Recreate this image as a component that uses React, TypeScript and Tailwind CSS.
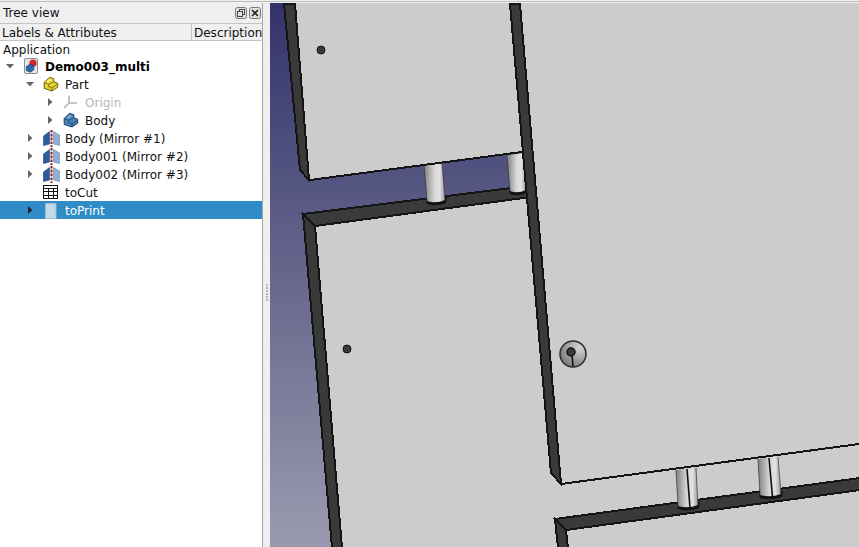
import type { ReactNode } from 'react';

function Arrow({ dir, fill = '#666' }: { dir?: 'down' | 'right'; fill?: string }) {
  if (!dir) return <span className="w-5 shrink-0" />;
  return (
    <span className="flex w-5 shrink-0 items-center justify-center">
      <svg width="10" height="10" viewBox="0 0 10 10">
        {dir === 'down' ? <path d="M1 3h8L5 7.5z" fill={fill} /> : <path d="M3 1v8L7.5 5z" fill={fill} />}
      </svg>
    </span>
  );
}

function DocIcon() {
  return (
    <svg width="16" height="16" viewBox="0 0 16 16">
      <rect x="1.5" y="0.5" width="13" height="15" rx="1.5" fill="#e4e6ea" stroke="#8a8f98" />
      <circle cx="10" cy="5.2" r="3.6" fill="#d3262a" />
      <path d="M3.4 8.6l3.6-2.4 3.8 1.4v4.2l-3.6 2.4-3.8-1.6z" fill="#2f6aa8" stroke="#173e6b" strokeWidth="0.7" />
    </svg>
  );
}

function PartIcon() {
  return (
    <svg width="16" height="16" viewBox="0 0 16 16">
      <path d="M1.2 6.5L6.5 1.2l4.3 1.6v3l3.9 1.4v4L9 15 1.2 12.4z" fill="#e8d335" stroke="#6b5f12" strokeWidth="1" />
      <path d="M1.2 6.5l4.4 1.7 5.2-2.4M5.6 8.2v2.4l3.4 1.3V15M9 11.9l5.7-3.7" fill="none" stroke="#7c6d14" strokeWidth="0.9" />
      <path d="M3 6l3.6-3 2.6 1-3.6 2.8z" fill="#f6ea7a" />
    </svg>
  );
}

function OriginIcon() {
  return (
    <svg width="16" height="16" viewBox="0 0 16 16">
      <path d="M6 1.5v7.5M6 9l8 0M6 9l-5 5" fill="none" stroke="#b5b5b5" strokeWidth="1.6" />
    </svg>
  );
}

function BodyIcon() {
  return (
    <svg width="16" height="16" viewBox="0 0 16 16">
      <path d="M1.2 6.5L6.5 1.2l4.3 1.6v3l3.9 1.4v4L9 15 1.2 12.4z" fill="#4d82b8" stroke="#1f3f66" strokeWidth="1" />
      <path d="M1.2 6.5l4.4 1.7 5.2-2.4M5.6 8.2v2.4l3.4 1.3V15M9 11.9l5.7-3.7" fill="none" stroke="#234a75" strokeWidth="0.9" />
      <path d="M3 6l3.6-3 2.6 1-3.6 2.8z" fill="#7ea8d2" />
    </svg>
  );
}

function MirrorIcon() {
  return (
    <svg width="17" height="17" viewBox="0 0 17 17">
      <path d="M0.5 6l6-4.5V14L0.5 15.5z" fill="#2a5c9e" stroke="#1f4477" strokeWidth="0.6" />
      <path d="M10.5 1.5l6 3.5v10.5l-6-1.5z" fill="#8fb0d4" stroke="#5f85ad" strokeWidth="0.6" />
      <path d="M8.5 0v17" stroke="#8c1f24" strokeWidth="2" strokeDasharray="2.6 1.2" />
    </svg>
  );
}

function SheetIcon() {
  return (
    <svg width="16" height="14" viewBox="0 0 16 14" shapeRendering="crispEdges">
      <path
        d="M.5.5h14v13H.5zM.5 3.5h14M.5 6.5h14M.5 10.5h14M5.5 3.5v10M10.5 3.5v10"
        fill="#fff"
        stroke="#111"
      />
    </svg>
  );
}

function FeatureIcon() {
  return (
    <svg width="16" height="17" viewBox="0 0 16 17">
      <rect x="2.5" y="1.5" width="10.5" height="15" fill="#c3d9e8" stroke="#a3bccd" />
    </svg>
  );
}

type RowProps = {
  indent?: string;
  arrow?: 'down' | 'right';
  arrowFill?: string;
  icon: ReactNode;
  label: string;
  className?: string;
};

function Row({ indent = 'pl-0', arrow, arrowFill, icon, label, className = '' }: RowProps) {
  return (
    <div className={`flex h-[18px] items-center ${indent} ${className}`}>
      <Arrow dir={arrow} fill={arrowFill} />
      <span className="flex w-[25px] shrink-0 items-center pl-[3px]">{icon}</span>
      <span className="whitespace-nowrap pt-[2px]">{label}</span>
    </div>
  );
}

type PegProps = { id: string; x1: number; x2: number; y1: number; x3: number; x4: number; y2: number; line?: boolean };

function Peg({ id, x1, x2, y1, x3, x4, y2, line }: PegProps) {
  return (
    <g>
      <path
        d={`M${x3 - 1} ${y2 - 5}L${x4 + 2} ${y2 - 7}L${x4 + 1} ${y2 - 1}Q${(x3 + x4) / 2} ${y2 + 3} ${x3} ${y2}Z`}
        fill="#111"
      />
      <path
        d={`M${x1} ${y1 + 2}L${x2} ${y1}L${x4} ${y2 - 4}Q${(x3 + x4) / 2} ${y2} ${x3} ${y2 - 3}Z`}
        fill={`url(#${id})`}
      />
      <path d={`M${x1} ${y1 + 2}L${x3} ${y2 - 3}M${x2} ${y1}L${x4} ${y2 - 4}`} stroke="#333" strokeWidth="0.7" fill="none" />
      {line && (
        <path d={`M${(x1 + x2) / 2 + 1} ${y1 + 1}L${(x3 + x4) / 2 + 2} ${y2 - 1}`} stroke="#111" strokeWidth="1.6" fill="none" />
      )}
    </g>
  );
}

const wall = { fill: '#3a3a3a', stroke: '#141414', strokeWidth: 2 };

function Viewport() {
  return (
    <svg className="block h-full w-full" viewBox="270 3 589 544" preserveAspectRatio="none">
      <defs>
        <linearGradient id="bg" x1="0" y1="0" x2="0" y2="1">
          <stop offset="0" stopColor="#33336b" />
          <stop offset="1" stopColor="#9a9aaf" />
        </linearGradient>
        {['p1', 'p2', 'p3', 'p4'].map((id) => (
          <linearGradient key={id} id={id} x1="0" y1="0" x2="1" y2="0">
            <stop offset="0" stopColor="#7f7f7f" />
            <stop offset="0.5" stopColor="#d8d8d8" />
            <stop offset="0.75" stopColor="#e2e2e2" />
            <stop offset="1" stopColor="#999" />
          </linearGradient>
        ))}
        <radialGradient id="pit" cx="0.75" cy="0.25" r="0.95">
          <stop offset="0" stopColor="#d4d4d4" />
          <stop offset="1" stopColor="#6f6f6f" />
        </radialGradient>
      </defs>
      <rect x="270" y="3" width="589" height="544" fill="url(#bg)" />

      <g shapeRendering="crispEdges">
        {/* lower plate and right plate */}
        <polygon points="315,226 530,197 520,3 859,3 859,547 342,547" fill="#cccccc" />
        {/* upper plate */}
        <polygon points="295,3 520,3 524,152 310,180" fill="#cccccc" />
        {/* strip along lower plate */}
        <polygon points="303,214 527,186 531,197 315,226" {...wall} />
      </g>

      <Peg id="p1" x1={424} x2={442} y1={163} x3={427} x4={445} y2={204} />
      <Peg id="p2" x1={507} x2={524} y1={153} x3={510} x4={526} y2={194} />

      <g shapeRendering="crispEdges">
        <polygon points="284,4 295,4 309,180 300,170" {...wall} />
        <path d="M310 180L522 152" stroke="#141414" strokeWidth="2" fill="none" />
        <polygon points="510,4 520,4 561,484 551,473" {...wall} />
        <polygon points="303,214 315,226 342,548 332,548" {...wall} />
        <path d="M561 484L859 444" stroke="#141414" strokeWidth="2" fill="none" />
        <polygon points="555,519 860,478 860,490 566,530" {...wall} />
        <polygon points="555,519 566,530 568,548 558,548" {...wall} />
      </g>

      <Peg id="p3" x1={676} x2={696} y1={468} x3={678} x4={698} y2={509} line />
      <Peg id="p4" x1={758} x2={778} y1={457} x3={760} x4={781} y2={498} line />

      <circle cx="321" cy="50" r="4" fill="#3a3a3a" stroke="#141414" />
      <circle cx="347" cy="349" r="4" fill="#3a3a3a" stroke="#141414" />

      <circle cx="573" cy="354" r="13" fill="url(#pit)" stroke="#2a2a2a" strokeWidth="1.5" />
      <path d="M572 355L573 366" stroke="#111" strokeWidth="1.6" />
      <circle cx="571" cy="352" r="4" fill="#3a3a3a" stroke="#141414" strokeWidth="1.5" />
    </svg>
  );
}

export default function App() {
  return (
    <div className="flex h-[547px] w-[859px] flex-col overflow-hidden bg-[#efefef] font-['DejaVu_Sans',sans-serif] text-[12px] text-[#111]">
      <div className="h-[3px] shrink-0 border-b border-[#efefef] bg-[#bdbdbd] [box-shadow:inset_0_1px_0_#efefef]" />
      <div className="flex min-h-0 flex-1">
        <div className="flex w-[263px] shrink-0 flex-col border-r border-[#a8a8a8]">
          <div className="flex h-[20px] shrink-0 items-center justify-between pl-[3px] pr-[1px]">
            <span>Tree view</span>
            <div className="flex items-center gap-[2px]">
              <svg width="12" height="12" viewBox="0 0 12 12" fill="none" stroke="#444">
                <rect x="0.5" y="0.5" width="11" height="11" rx="2" fill="#e2e2e2" stroke="#777" />
                <rect x="4.5" y="2.5" width="5" height="5" />
                <rect x="2.5" y="4.5" width="5" height="5" fill="#e2e2e2" />
              </svg>
              <svg width="12" height="12" viewBox="0 0 12 12" fill="none">
                <rect x="0.5" y="0.5" width="11" height="11" rx="2" fill="#e2e2e2" stroke="#777" />
                <path d="M3 3l6 6M9 3l-6 6" stroke="#222" strokeWidth="1.6" />
              </svg>
            </div>
          </div>
          <div className="flex h-[18px] shrink-0 border-y border-[#c4c4c4]">
            <div className="flex w-[192px] items-center border-r border-[#c4c4c4] pl-[2px] pt-[1px]">Labels &amp; Attributes</div>
            <div className="flex flex-1 items-center overflow-hidden pl-[2px] pt-[1px]">Description</div>
          </div>
          <div className="flex-1 bg-white">
            <div className="flex h-[16px] items-center pl-[3px] pt-[1px]">Application</div>
            <Row arrow="down" icon={<DocIcon />} label="Demo003_multi" className="font-bold text-black" />
            <Row indent="pl-[20px]" arrow="down" icon={<PartIcon />} label="Part" />
            <Row indent="pl-[40px]" arrow="right" icon={<OriginIcon />} label="Origin" className="text-[#b8b8b8]" />
            <Row indent="pl-[40px]" arrow="right" icon={<BodyIcon />} label="Body" />
            <Row indent="pl-[20px]" arrow="right" icon={<MirrorIcon />} label="Body (Mirror #1)" />
            <Row indent="pl-[20px]" arrow="right" icon={<MirrorIcon />} label="Body001 (Mirror #2)" />
            <Row indent="pl-[20px]" arrow="right" icon={<MirrorIcon />} label="Body002 (Mirror #3)" />
            <Row indent="pl-[20px]" icon={<SheetIcon />} label="toCut" />
            <Row indent="pl-[20px]" arrow="right" arrowFill="#223" icon={<FeatureIcon />} label="toPrint" className="bg-[#308cc6] text-white" />
          </div>
        </div>
        <div className="flex w-[7px] shrink-0 flex-col items-center justify-center gap-[1px] pt-[34px]">
          {[0, 1, 2, 3, 4, 5].map((i) => (
            <span key={i} className="h-[2px] w-[2px] bg-[#b5b5b5]" />
          ))}
        </div>
        <div className="min-w-0 flex-1">
          <Viewport />
        </div>
      </div>
    </div>
  );
}
